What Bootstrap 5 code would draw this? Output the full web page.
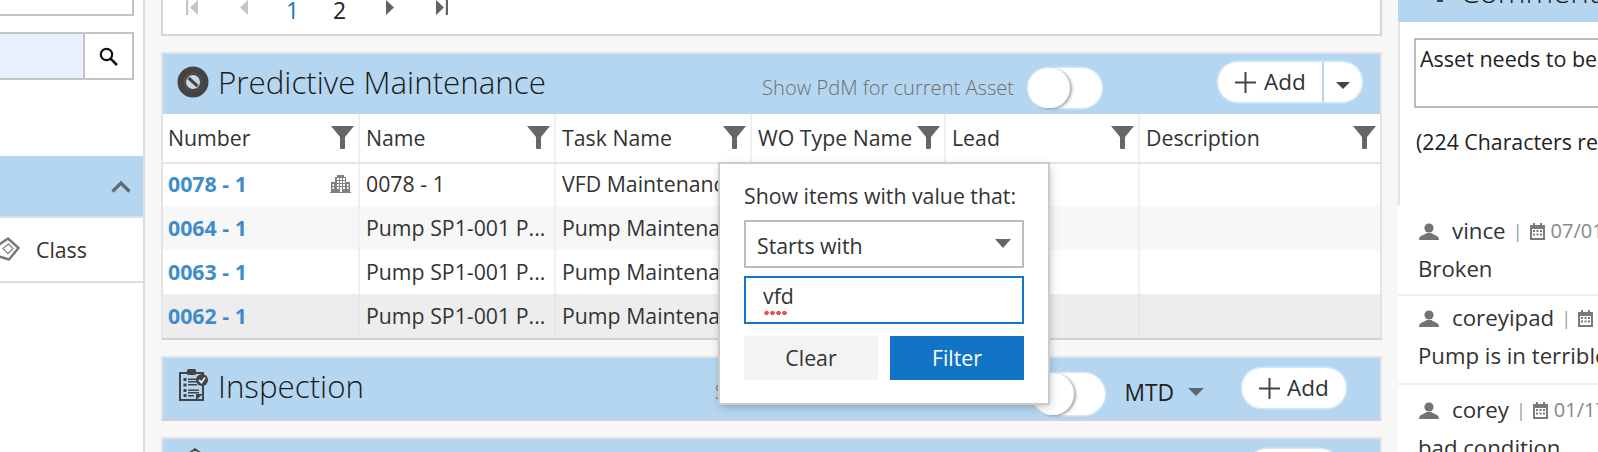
<!doctype html>
<html lang="en">
<head>
<meta charset="utf-8">
<title>Predictive Maintenance</title>
<link href="https://cdn.jsdelivr.net/npm/bootstrap@5.3.0/dist/css/bootstrap.min.css" rel="stylesheet">
<style>
html,body{height:452px;overflow:hidden}
body{font-family:"Open Sans","Liberation Sans",sans-serif;font-size:21.3px;color:#333;background:#f7f7f7;position:relative;width:1598px}
.shell{display:flex;gap:16px;height:452px;overflow:hidden}
.leftcol{flex:0 0 145px;background:#fff;border-right:2px solid #ddd;height:452px}
.topfield{height:16px;width:134px;border:2px solid #c4c4c4;border-top:0;border-left:0;background:#fff}
.searchbox{display:flex;height:48px;width:134px;margin-top:16px;border:2px solid #c4c4c4;border-left:0}
.searchfill{width:85px;background:#e8f0fe;border-right:2px solid #c4c4c4}
.searchbtn{flex:1;display:flex;align-items:center;justify-content:center}
.leftband{margin-top:76px;height:62px;background:#b5d6f0;border-bottom:2px solid #ddd;display:flex;align-items:center;justify-content:flex-end;padding-right:12px}
.classrow{height:65px;border-bottom:2px solid #ddd;display:flex;align-items:center;gap:16px;color:#333}
.classrow svg{margin-top:-1px}

.maincol{flex:0 0 1221px;display:flex;flex-direction:column;gap:16px}
.pagerbox{height:36px;background:#fff;border:2px solid #d4d4dc;border-top:0;border-width:0 2px 2px 2px;flex:none;overflow:hidden}
.pagerrow{display:flex;align-items:flex-start;height:20px}
.pg1{margin-left:23px}.pg2{margin-left:42px}.pg3{margin-left:38px;color:#1274c6;font-size:23px;line-height:20px;width:11px}
.pg4{margin-left:36px;color:#222;font-size:23px;line-height:20px;width:13px}.pg5{margin-left:40px}.pg6{margin-left:42px}
.mpanel{flex:none;background:#fff;border:2px solid #e4e4e8;border-bottom:2px solid #d0d0d8}
.mpanel.tail{height:60px}
.bandrow{height:60px;background:#b5d6f0;display:flex;align-items:center}
.band-tall{height:61px}
.bandicon{flex:none}
.icon-nut{margin-left:14px;margin-top:-4px}
.icon-clip{margin-left:16px;margin-top:-8px}
.icon-box{margin-left:24px;margin-top:-10px}
.bandtitle{font-weight:300;font-size:31.3px;color:#1c1c1c;line-height:1;margin-left:9px;margin-top:-3px;white-space:nowrap}
.band-tall .bandtitle{margin-left:10px;margin-top:-4px}
.ctrls{margin-left:auto;display:flex;align-items:center}
.showlabel{font-weight:300;color:#6f6f6f;font-size:20.1px;white-space:nowrap;margin-top:8px}
.toggler{width:74px;height:40px;border-radius:20px;background:#fff;box-shadow:0 0 0 1.5px #cfe5f8;margin-left:14px;margin-top:7px;display:block}
.knob{display:block;width:42px;height:40px;border-radius:20px;background:#fff;box-shadow:2px 1px 3px rgba(0,0,0,.35)}
.addgroup{margin-left:116px;margin-right:18px;margin-top:-4px;display:flex;border-radius:20px;box-shadow:0 0 0 1.5px #cfe5f8}
.addgroup .btn,.addpill.btn{background:#fff;border:0;height:40px;color:#333;font-size:22.5px;display:flex;align-items:center;padding:0;line-height:1}
.addmain{width:105px;border-radius:20px 0 0 20px;padding-left:17px!important;gap:8px}
.addcaret{width:40px;border-radius:0 20px 20px 0;border-left:2px solid #b5d6f0!important;justify-content:center;padding-top:7px!important}
.addpill.btn{width:104px;padding-left:17px;gap:7px;border-radius:20px;margin-left:38px;margin-right:34px;margin-top:-1px;box-shadow:0 0 0 1.5px #cfe5f8}
.mtdlabel{margin-left:19px;font-size:22.8px;color:#222;margin-top:10px}
.mtdcaret{margin-left:14px;margin-top:7px}
.tgl3{margin-left:13px;margin-top:11px;width:73px;height:42px;border-radius:21px}
.tgl3 .knob{height:42px;border-radius:21px}
.tailpill{margin-left:auto;margin-right:40px;width:93px;height:40px;border-radius:20px;background:#fff;box-shadow:0 0 0 1.5px #cfe5f8}
.wogrid{width:100%;table-layout:fixed;margin:0;border-collapse:collapse}
.wogrid th,.wogrid td{padding:0 7px 0 6px;font-size:21.3px;color:#333;font-weight:400;white-space:nowrap;overflow:hidden;text-overflow:ellipsis;border:0;border-left:2px solid #f0f0f2;vertical-align:middle;background:#fff;box-shadow:none}
.wogrid th:first-child,.wogrid td:first-child{border-left:0;padding-left:5px}
.wogrid thead th{height:49px;border-bottom:2px solid #e4e4e8}
.wogrid tbody tr{height:44px}
.wogrid tbody tr:first-child{height:43px}
.wogrid tbody tr:first-child td{padding-bottom:2px}
.wogrid tr.rowalt td{background:#f7f7f7}
.wogrid tr.rowsel td{background:#ededed;border-left-color:#e8e8ea}
.headcell{display:flex;align-items:center;justify-content:space-between}
.headcell svg{margin-right:-3px;flex:none;margin-top:-1px}
.wolink{color:#3f8bcb;font-weight:700;text-decoration:none}
.numcell{display:flex;align-items:center;justify-content:space-between}

.rightcol{flex:0 0 400px;height:452px;overflow:hidden}
.rightband{height:22px;background:#b5d6f0;overflow:hidden;display:flex;align-items:flex-start;padding-left:39px;gap:17px}
.rightband span{font-weight:300;font-size:31.3px;line-height:1;color:#1c1c1c;margin-top:-24px;display:block}
.entrybox{height:183px;background:#fff;border-left:2px solid #e4e4e8;padding:16px 14px 0;box-sizing:border-box}
.notearea{display:block;width:380px;height:70px;border:2px solid #bbb;border-radius:0;padding:5px 4px 4px;font-size:21.5px;line-height:1.3;color:#222;resize:none;font-family:inherit;overflow:hidden;box-shadow:none}
.remain{margin-top:20px;color:#222;line-height:28px;margin-left:2px}
.noteitem{background:#fff;padding-left:21px;border-bottom:2px solid #eee;height:89px;color:#333}
.noteitem.first{height:91px;padding-top:12px}
.noteitem.mid{padding-top:8px}
.noteitem.last{border-bottom:0;padding-top:11px;height:70px}
.metaline{display:flex;align-items:center;line-height:28px;height:28px;white-space:nowrap}
.metaline .who{margin-left:13px;font-size:22.3px}
.metaline .pipe{color:#999;margin:0 7px;font-size:18px}
.metaline .when{color:#888;margin-left:6px;font-size:20px}
.notebody{line-height:28px;margin-top:10px;margin-left:-1px;white-space:nowrap;font-size:22.2px}

.filterpop{position:absolute;left:720px;top:164px;width:328px;height:239px;background:#fff;box-shadow:0 0 0 2px #ccc,1px 3px 9px rgba(0,0,0,.3);padding:17px 24px 0 24px}
.poplabel{line-height:30px;color:#333;white-space:nowrap;margin-bottom:9px}
.popselect.form-select{height:48px;border:2px solid #bbb;border-radius:0;font-size:21.3px;color:#333;padding:3px 11px 0;box-shadow:none;background-size:16px 9px;background-position:right 11px top 17px;background-image:url("data:image/svg+xml,%3Csvg xmlns='http://www.w3.org/2000/svg' viewBox='0 0 16 9'%3E%3Cpath d='M0 0H16L8 9Z' fill='%23666'/%3E%3C/svg%3E")}
.popfield{position:relative;margin-top:8px}
.popinput.form-control{height:48px;border:2px solid #1274c6;border-radius:0;font-size:21.3px;color:#333;padding:0 17px 10px;box-shadow:none}
.squiggle{position:absolute;left:20px;top:35px;width:24px;height:4px;background-image:radial-gradient(circle at 2.5px 2px,#f05050 2px,transparent 2.4px);background-size:6px 4px}
.popbtns{display:flex;justify-content:space-between;margin-top:12px}
.popbtns .btn{width:134px;height:44px;border:0;border-radius:0;font-size:21.3px;padding:0}
.clearbtn.btn{background:#f3f3f3;color:#333}
.filterbtn.btn{background:#1274c6;color:#fff}
</style>
</head>
<body>
<div class="shell">
  <aside class="leftcol">
    <div class="topfield"></div>
    <div class="searchbox">
      <div class="searchfill"></div>
      <div class="searchbtn">
        <svg width="19" height="19" viewBox="0 0 19 19"><circle cx="7.5" cy="7.5" r="5.7" fill="none" stroke="#111" stroke-width="2.2"/><path d="M11.8 11.8L18 18" stroke="#111" stroke-width="2.6"/></svg>
      </div>
    </div>
    <div class="leftband">
      <svg width="20" height="13" viewBox="0 0 20 13"><path d="M1.500 11.500L10 3L18.500 11.500" fill="none" stroke="#5e6b76" stroke-width="3.2"/></svg>
    </div>
    <div class="classrow">
      <svg width="20" height="24" viewBox="0 0 20 24"><path d="M8 1.500L18.500 11L9 22.500L-2 19L-3 9Z" fill="none" stroke="#777" stroke-width="2.4" stroke-linejoin="round"/><path d="M3 11.500L8.500 7L13 11.500L8 16.500Z" fill="none" stroke="#888" stroke-width="1.300"/></svg>
      <span>Class</span>
    </div>
  </aside>

  <main class="maincol">
    <div class="pagerbox">
      <div class="pagerrow">
        <svg class="pg1" width="12" height="15" viewBox="0 0 12 15"><path d="M0 0H2.200V15H0ZM12 0V15L4 7.500Z" fill="#c2c6cb"/></svg>
        <svg class="pg2" width="8" height="15" viewBox="0 0 8 15"><path d="M8 0V15L0 7.500Z" fill="#c2c6cb"/></svg>
        <span class="pg3">1</span>
        <span class="pg4">2</span>
        <svg class="pg5" width="8" height="15" viewBox="0 0 8 15"><path d="M0 0V15L8 7.500Z" fill="#5f6368"/></svg>
        <svg class="pg6" width="12" height="15" viewBox="0 0 12 15"><path d="M0 0V15L8 7.500ZM9.800 0H12V15H9.800Z" fill="#5f6368"/></svg>
      </div>
    </div>

    <section class="mpanel">
      <div class="bandrow">
        <svg class="bandicon icon-nut" width="32" height="32" viewBox="0 0 32 32"><circle cx="16" cy="16" r="15.500" fill="#444"/><path d="M16 6.500L24.300 11.200V20.800L16 25.500L7.700 20.800V11.200Z" fill="#444" stroke="#555" stroke-width="1"/><circle cx="16" cy="16" r="7" fill="#c9d9e6"/><path d="M11.500 11.800L20.500 20.200" stroke="#444" stroke-width="3.200"/></svg>
        <span class="bandtitle">Predictive Maintenance</span>
        <div class="ctrls">
          <span class="showlabel">Show PdM for current Asset</span>
          <span class="toggler"><span class="knob"></span></span>
          <div class="addgroup btn-group">
            <button type="button" class="btn addmain"><svg width="21" height="21" viewBox="0 0 21 21"><path d="M10.500 0V21M0 10.500H21" stroke="#444" stroke-width="2"/></svg>Add</button>
            <button type="button" class="btn addcaret" aria-label="More"><svg width="14" height="7" viewBox="0 0 14 7"><path d="M0 0H14L7 7Z" fill="#444"/></svg></button>
          </div>
        </div>
      </div>
      <table class="table wogrid">
        <colgroup><col style="width:196px"><col style="width:196px"><col style="width:196px"><col style="width:194px"><col style="width:194px"><col style="width:241px"></colgroup>
        <thead>
          <tr>
            <th><div class="headcell">Number<svg width="23" height="23" viewBox="0 0 23 23"><path d="M0 0H23L14 11V22Q14 23 13 23H10Q9 23 9 22V11Z" fill="#666"/></svg></div></th>
            <th><div class="headcell">Name<svg width="23" height="23" viewBox="0 0 23 23"><path d="M0 0H23L14 11V22Q14 23 13 23H10Q9 23 9 22V11Z" fill="#666"/></svg></div></th>
            <th><div class="headcell">Task Name<svg width="23" height="23" viewBox="0 0 23 23"><path d="M0 0H23L14 11V22Q14 23 13 23H10Q9 23 9 22V11Z" fill="#666"/></svg></div></th>
            <th><div class="headcell">WO Type Name<svg width="23" height="23" viewBox="0 0 23 23"><path d="M0 0H23L14 11V22Q14 23 13 23H10Q9 23 9 22V11Z" fill="#666"/></svg></div></th>
            <th><div class="headcell">Lead<svg width="23" height="23" viewBox="0 0 23 23"><path d="M0 0H23L14 11V22Q14 23 13 23H10Q9 23 9 22V11Z" fill="#666"/></svg></div></th>
            <th><div class="headcell">Description<svg width="23" height="23" viewBox="0 0 23 23"><path d="M0 0H23L14 11V22Q14 23 13 23H10Q9 23 9 22V11Z" fill="#666"/></svg></div></th>
          </tr>
        </thead>
        <tbody>
          <tr>
            <td><div class="numcell"><a class="wolink" href="#">0078 - 1</a><svg width="21" height="18" viewBox="0 0 21 18"><path fill="#808080" fill-rule="evenodd" d="M5 2H7V0H14V2H16V7H20V17H21V18H0V17H1V7H5ZM7 3V5H9V3ZM10 3V5H12V3ZM13 3V5H15V3ZM7 6V8H9V6ZM10 6V8H12V6ZM13 6V8H15V6ZM7 9V11H9V9ZM10 9V11H12V9ZM13 9V11H15V9ZM7 12V14H9V12ZM13 12V14H15V12ZM10 12V17H12V12ZM2.500 9V11H4V9ZM2.500 12V14H4V12ZM17 9V11H18.500V9ZM17 12V14H18.500V12Z"/></svg></div></td>
            <td>0078 - 1</td><td>VFD Maintenance</td><td></td><td></td><td></td>
          </tr>
          <tr class="rowalt">
            <td><a class="wolink" href="#">0064 - 1</a></td><td>Pump SP1-001 P...</td><td>Pump Maintenance</td><td></td><td></td><td></td>
          </tr>
          <tr>
            <td><a class="wolink" href="#">0063 - 1</a></td><td>Pump SP1-001 P...</td><td>Pump Maintenance</td><td></td><td></td><td></td>
          </tr>
          <tr class="rowsel">
            <td><a class="wolink" href="#">0062 - 1</a></td><td>Pump SP1-001 P...</td><td>Pump Maintenance</td><td></td><td></td><td></td>
          </tr>
        </tbody>
      </table>
    </section>

    <section class="mpanel">
      <div class="bandrow band-tall">
        <svg class="bandicon icon-clip" width="29" height="32" viewBox="0 0 29 32"><path d="M1 4H24V31H1Z" fill="#b5d6f0" stroke="#444" stroke-width="2"/><rect x="8" y="0" width="9" height="6" rx="1.500" fill="#444"/><g fill="#444"><rect x="4.500" y="9" width="3" height="3"/><rect x="4.500" y="14.500" width="3" height="3"/><rect x="4.500" y="20" width="3" height="3"/><rect x="4.500" y="25" width="3" height="3"/><rect x="9" y="9.500" width="9" height="1.500"/><rect x="9" y="12" width="9" height="1.500"/><rect x="9" y="15" width="9" height="1.500"/><rect x="9" y="20.500" width="11" height="1.500"/><rect x="9" y="23" width="11" height="1.500"/><rect x="9" y="26" width="6" height="1.500"/><path d="M17 31V25H24Z"/><circle cx="23" cy="11" r="6"/></g><path d="M20 11L22.500 13.500L26 8.500" fill="none" stroke="#dbe9f4" stroke-width="1.800"/></svg>
        <span class="bandtitle">Inspection</span>
        <div class="ctrls">
          <span class="showlabel">Show Inspection for current Asset</span>
          <span class="toggler tgl3"><span class="knob"></span></span>
          <span class="mtdlabel">MTD</span>
          <svg class="mtdcaret" width="16" height="8" viewBox="0 0 16 8"><path d="M0 0H16L8 8Z" fill="#5a6670"/></svg>
          <button type="button" class="btn addpill"><svg width="21" height="21" viewBox="0 0 21 21"><path d="M10.500 0V21M0 10.500H21" stroke="#444" stroke-width="2"/></svg>Add</button>
        </div>
      </div>
    </section>

    <section class="mpanel tail">
      <div class="bandrow">
        <svg class="bandicon icon-box" width="16" height="32" viewBox="0 0 16 32"><path d="M1 8V6L8 1L15 6V8H1Z" fill="#b5d6f0" stroke="#444" stroke-width="1.600"/></svg>
        <span class="tailpill"></span>
      </div>
    </section>
  </main>

  <aside class="rightcol">
    <div class="rightband">
      <svg width="6" height="2" viewBox="0 0 6 2"><path d="M0 1H6" stroke="#444" stroke-width="2"/></svg>
      <span>Comments</span>
    </div>
    <div class="entrybox">
      <textarea class="notearea" aria-label="Comment">Asset needs to be</textarea>
      <div class="remain">(224 Characters remaining)</div>
    </div>
    <div class="noteitem first">
      <div class="metaline">
        <svg width="20" height="17" viewBox="0 0 20 17"><circle cx="10" cy="5" r="4.600" fill="#737373"/><path d="M0 17C0 12 6 12 7.500 10H12.500C14 12 20 12 20 17Z" fill="#737373"/></svg>
        <span class="who">vince</span><span class="pipe">|</span>
        <svg width="15" height="17" viewBox="0 0 15 17"><path fill="#7a7a7a" fill-rule="evenodd" d="M0 2H3V0H5V2H10V0H12V2H15V17H0ZM2 6V15H13V6ZM3 7H5V9H3ZM6.500 7H8.500V9H6.500ZM10 7H12V9H10ZM3 10.500H5V12.500H3ZM6.500 10.500H8.500V12.500H6.500ZM10 10.500H12V12.500H10Z"/></svg>
        <span class="when">07/01</span>
      </div>
      <div class="notebody">Broken</div>
    </div>
    <div class="noteitem mid">
      <div class="metaline">
        <svg width="20" height="17" viewBox="0 0 20 17"><circle cx="10" cy="5" r="4.600" fill="#737373"/><path d="M0 17C0 12 6 12 7.500 10H12.500C14 12 20 12 20 17Z" fill="#737373"/></svg>
        <span class="who">coreyipad</span><span class="pipe">|</span>
        <svg width="15" height="17" viewBox="0 0 15 17"><path fill="#7a7a7a" fill-rule="evenodd" d="M0 2H3V0H5V2H10V0H12V2H15V17H0ZM2 6V15H13V6ZM3 7H5V9H3ZM6.500 7H8.500V9H6.500ZM10 7H12V9H10ZM3 10.500H5V12.500H3ZM6.500 10.500H8.500V12.500H6.500ZM10 10.500H12V12.500H10Z"/></svg>
      </div>
      <div class="notebody">Pump is in terrible condition</div>
    </div>
    <div class="noteitem last">
      <div class="metaline">
        <svg width="20" height="17" viewBox="0 0 20 17"><circle cx="10" cy="5" r="4.600" fill="#737373"/><path d="M0 17C0 12 6 12 7.500 10H12.500C14 12 20 12 20 17Z" fill="#737373"/></svg>
        <span class="who">corey</span><span class="pipe">|</span>
        <svg width="15" height="17" viewBox="0 0 15 17"><path fill="#7a7a7a" fill-rule="evenodd" d="M0 2H3V0H5V2H10V0H12V2H15V17H0ZM2 6V15H13V6ZM3 7H5V9H3ZM6.500 7H8.500V9H6.500ZM10 7H12V9H10ZM3 10.500H5V12.500H3ZM6.500 10.500H8.500V12.500H6.500ZM10 10.500H12V12.500H10Z"/></svg>
        <span class="when">01/17</span>
      </div>
      <div class="notebody">bad condition</div>
    </div>
  </aside>
</div>

<div class="filterpop">
  <div class="poplabel">Show items with value that:</div>
  <select class="form-select popselect" aria-label="Operator"><option>Starts with</option></select>
  <div class="popfield">
    <input class="form-control popinput" type="text" value="vfd" aria-label="Value">
    <span class="squiggle"></span>
  </div>
  <div class="popbtns">
    <button type="button" class="btn clearbtn">Clear</button>
    <button type="button" class="btn filterbtn">Filter</button>
  </div>
</div>
<script src="https://cdn.jsdelivr.net/npm/bootstrap@5.3.0/dist/js/bootstrap.bundle.min.js"></script>
</body>
</html>
